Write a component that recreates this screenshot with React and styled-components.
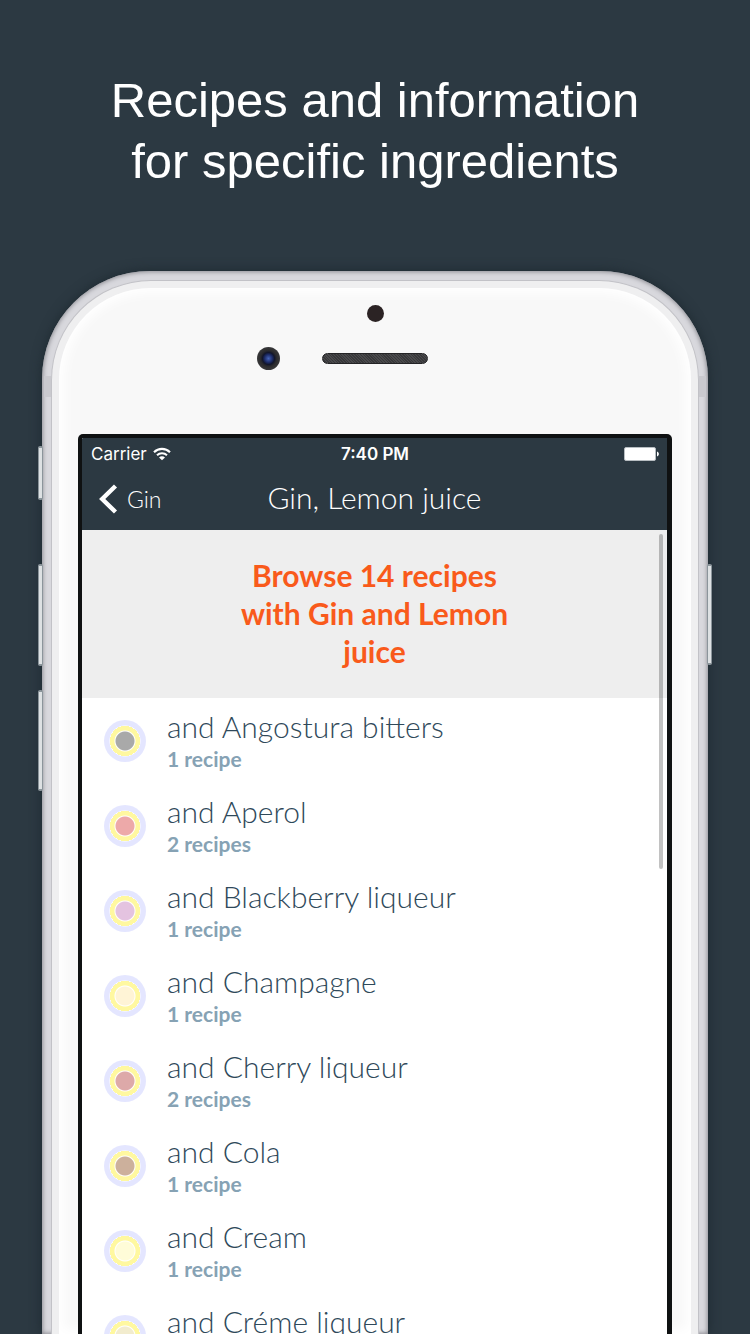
import React from "react";
import styled, { createGlobalStyle } from "styled-components";

const GlobalStyle = createGlobalStyle`
  * { box-sizing: border-box; }
  body { margin: 0; background: #2c3942; }
`;

const Page = styled.main`
  height: 100vh;
  display: flex;
  flex-direction: column;
  align-items: center;
  overflow: hidden;
  padding-top: 70px;
  background: #2c3942;
  font-family: Lato, "Open Sans", sans-serif;
`;

const Headline = styled.h1`
  margin: 0 0 79px;
  color: #fff;
  font: 400 49px/61px "Liberation Sans", Arial, sans-serif;
  text-align: center;
  max-width: 560px;
`;

const Phone = styled.section`
  position: relative;
  flex: 1;
  min-height: 0;
  width: calc(100% - 84px);
  padding: 9px 9px 0;
  border-radius: 108px 108px 0 0;
  background: #d8d8dd;
  box-shadow: inset 0 0 4px 1px #8e8e94, 0 0 12px #1d2930;
`;

const Ring = styled.div`
  height: 100%;
  padding: 7px 7px 0;
  border: 1px solid #c2c2c7;
  border-bottom: 0;
  border-radius: 100px 100px 0 0;
  background: #efeff0;
`;

const Face = styled.div`
  height: 100%;
  display: flex;
  flex-direction: column;
  padding: 17px 19px 0;
  border-radius: 92px 92px 0 0;
  background: #f8f8f8;
  box-shadow: inset 0 0 12px 5px #fff;
`;

const SideKey = styled.span`
  position: absolute;
  top: ${(p) => p.$top}px;
  ${(p) => p.$side}: -4px;
  width: 5px;
  height: ${(p) => p.$length}px;
  border: 1px solid #8b959b;
  border-width: 2px 1px;
  border-radius: 2px;
  background: #dde1e3;
`;

const Antenna = styled.span`
  position: absolute;
  top: 105px;
  ${(p) => p.$side}: 2px;
  width: 7px;
  height: 21px;
  background: #c9c9ce;
`;

const Sensors = styled.div`
  display: grid;
  grid-template-columns: 1fr 106px 1fr;
  align-items: center;
  align-content: start;
  row-gap: 25px;
  margin-bottom: 64px;
`;

const Proximity = styled.span`
  grid-column: 2;
  justify-self: center;
  width: 17px;
  height: 17px;
  border-radius: 50%;
  background: #2b2324;
`;

const Camera = styled.span`
  grid-column: 1;
  justify-self: end;
  width: 23px;
  height: 23px;
  margin-right: 42px;
  border-radius: 50%;
  background: radial-gradient(circle, #4664b8 0, #1c2b66 4px, #12162b 6px, #2b2b2d 8px, #3a3a3c 12px);
`;

const Speaker = styled.span`
  height: 11px;
  border: 1px solid #242426;
  border-radius: 6px;
  background: repeating-linear-gradient(45deg, #38383a 0 1px, #4a4a4c 1px 2px);
`;

const Screen = styled.div`
  flex: 1;
  min-height: 0;
  display: flex;
  flex-direction: column;
  overflow: hidden;
  border: solid #0f1112;
  border-width: 4px 5px 0 4px;
  border-radius: 5px 5px 0 0;
  background: #fff;
`;

const StatusBar = styled.div`
  flex: none;
  display: grid;
  grid-template-columns: 1fr auto 1fr;
  align-items: center;
  height: 32px;
  padding: 0 8px 0 9px;
  background: #2c3942;
  color: #fff;
  font: 400 17px/20px Inter, sans-serif;
`;

const Carrier = styled.span`
  display: flex;
  align-items: center;
  gap: 6px;
`;

const Clock = styled.time`
  font-weight: 600;
`;

const Battery = styled.svg`
  justify-self: end;
`;

const NavBar = styled.header`
  flex: none;
  display: grid;
  grid-template-columns: 1fr auto 1fr;
  align-items: center;
  height: 60px;
  padding: 0 17px 2px;
  background: #2c3942;
  color: #fff;
`;

const BackButton = styled.button`
  justify-self: start;
  display: flex;
  align-items: center;
  gap: 9px;
  padding: 0;
  border: 0;
  background: none;
  color: inherit;
  font: 300 23px/30px Lato, sans-serif;
`;

const NavTitle = styled.h2`
  margin: 0;
  padding-bottom: 4px;
  font: 300 30px/34px Lato, sans-serif;
`;

const Scroller = styled.div`
  position: relative;
  flex: 1;
  min-height: 0;
  overflow: hidden;
`;

const ScrollThumb = styled.span`
  position: absolute;
  top: 4px;
  right: 4px;
  width: 4px;
  height: 335px;
  border-radius: 2px;
  background: rgba(0, 0, 0, 0.24);
`;

const BrowseButton = styled.button`
  display: flex;
  justify-content: center;
  width: 100%;
  padding: 26px 0 28px;
  border: 0;
  background: #eee;
  color: #f95a1b;
  font: 700 30px/38px Lato, sans-serif;
`;

const BrowseLabel = styled.span`
  max-width: 290px;
`;

const List = styled.ul`
  margin: 0;
  padding: 0;
  list-style: none;
`;

const Row = styled.a`
  display: flex;
  align-items: center;
  gap: 21px;
  height: 85px;
  padding-left: 22px;
  color: #2f495a;
  text-decoration: none;
`;

const RowText = styled.span`
  display: flex;
  flex-direction: column;
`;

const Name = styled.span`
  font-size: 30px;
  font-weight: 300;
  line-height: 36px;
`;

const Count = styled.span`
  color: #86a2b4;
  font-size: 21px;
  font-weight: 700;
  line-height: 30px;
`;

const Swatch = styled.span`
  flex: none;
  width: 42px;
  height: 42px;
  border-radius: 50%;
  background: radial-gradient(
    circle,
    ${(p) => p.$color} 9px,
    #fff 10px,
    #fff8a0 11px,
    #fff8a0 15px,
    #fff 15px,
    #e4e6ff 16px
  );
`;

const ingredients = [
  { name: "Angostura bitters", recipes: 1, color: "#a9a9a9" },
  { name: "Aperol", recipes: 2, color: "#eda9a9" },
  { name: "Blackberry liqueur", recipes: 1, color: "#e4c3e0" },
  { name: "Champagne", recipes: 1, color: "#fff4d6" },
  { name: "Cherry liqueur", recipes: 2, color: "#dda9a9" },
  { name: "Cola", recipes: 1, color: "#ccb09c" },
  { name: "Cream", recipes: 1, color: "#fffcd8" },
  { name: "Créme liqueur", recipes: 1, color: "#f2ecce" },
];

const WifiIcon = () => (
  <svg width="18" height="14" viewBox="0 0 18 14" fill="none" stroke="#fff" aria-hidden="true">
    <path d="M1 5.2a11.4 11.4 0 0 1 16 0" strokeWidth="2.1" />
    <path d="M4 8.3a7.1 7.1 0 0 1 10 0" strokeWidth="2" />
    <path d="M9 13.2 6 10.4a4.2 4.2 0 0 1 6 0z" fill="#fff" stroke="none" />
  </svg>
);

const BatteryIcon = () => (
  <Battery width="35" height="14" viewBox="0 0 35 14" role="img" aria-label="Battery full">
    <rect x="0.5" y="0.5" width="31" height="13" rx="1.5" fill="#fff" stroke="#b8bec2" />
    <path d="M33 4.5c1.2.4 1.9 1.3 1.9 2.5s-.7 2.1-1.9 2.5z" fill="#fff" />
  </Battery>
);

const ChevronIcon = () => (
  <svg width="19" height="30" viewBox="0 0 19 30" fill="none" aria-hidden="true">
    <path d="M16.5 2 3.2 15l13.3 13" stroke="#fff" strokeWidth="4.4" />
  </svg>
);

export default function App() {
  return (
    <Page>
      <GlobalStyle />
      <Headline>Recipes and information for specific ingredients</Headline>
      <Phone>
        <SideKey $side="left" $top={175} $length={54} />
        <SideKey $side="left" $top={293} $length={102} />
        <SideKey $side="left" $top={419} $length={101} />
        <SideKey $side="right" $top={293} $length={101} />
        <Antenna $side="left" />
        <Antenna $side="right" />
        <Ring>
          <Face>
            <Sensors>
              <Proximity />
              <Camera />
              <Speaker />
            </Sensors>
            <Screen>
              <StatusBar>
                <Carrier>
                  Carrier
                  <WifiIcon />
                </Carrier>
                <Clock>7:40 PM</Clock>
                <BatteryIcon />
              </StatusBar>
              <NavBar>
                <BackButton type="button">
                  <ChevronIcon />
                  Gin
                </BackButton>
                <NavTitle>Gin, Lemon juice</NavTitle>
              </NavBar>
              <Scroller>
                <BrowseButton type="button">
                  <BrowseLabel>Browse 14 recipes with Gin and Lemon juice</BrowseLabel>
                </BrowseButton>
                <List>
                  {ingredients.map((item) => (
                    <li key={item.name}>
                      <Row href="#recipes">
                        <Swatch $color={item.color} />
                        <RowText>
                          <Name>and {item.name}</Name>
                          <Count>
                            {item.recipes} {item.recipes === 1 ? "recipe" : "recipes"}
                          </Count>
                        </RowText>
                      </Row>
                    </li>
                  ))}
                </List>
                <ScrollThumb />
              </Scroller>
            </Screen>
          </Face>
        </Ring>
      </Phone>
    </Page>
  );
}
